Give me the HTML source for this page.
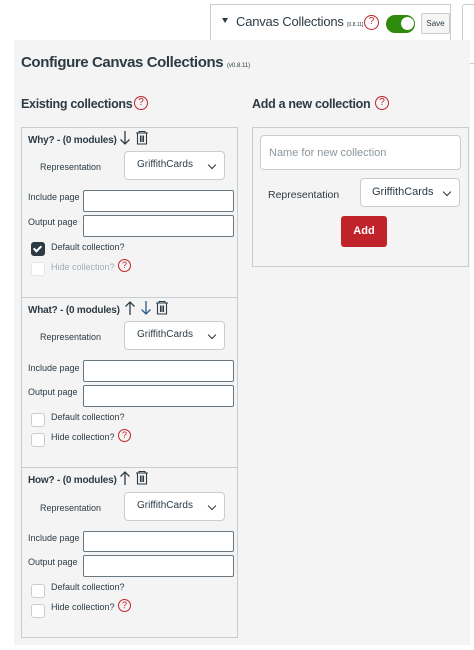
<!DOCTYPE html>
<html><head><meta charset="utf-8"><style>
*{box-sizing:border-box;margin:0;padding:0}
body{width:474px;height:650px;background:#fff;position:relative;overflow:hidden;font-family:"Liberation Sans",sans-serif;color:#2d3b45}
.a{position:absolute}
.q{position:absolute;width:14px;height:14px;border:1.3px solid #c1232a;border-radius:50%;color:#c1232a;font-size:10px;line-height:12px;text-align:center}
.box{position:absolute;border:1px solid #c7cdd1;background:#f4f4f4}
.lbl{position:absolute;font-size:9px;color:#2d3b45}
.inp{position:absolute;background:#fff;border:1px solid #6b7780;border-radius:2px}
.sel{position:absolute;background:#fff;border:1px solid #c7cdd1;border-radius:4px;font-size:10px;padding:7px 0 0 12px}
.sel:after{content:"";position:absolute;right:9px;top:10px;width:5px;height:5px;border-right:1.5px solid #333;border-bottom:1.5px solid #333;transform:rotate(45deg)}
.cb{position:absolute;width:14px;height:14px;background:#fff;border:1px solid #c7cdd1;border-radius:3px}
.hd{position:absolute;font-size:10px;font-weight:bold;letter-spacing:-0.2px}
</style></head><body>
<div class="a" style="left:210px;top:4px;width:241px;height:60px;border:1px solid #c7cdd1"></div>
<div class="a" style="left:462px;top:4px;width:20px;height:60px;border:1px solid #c7cdd1;border-radius:3px"></div>
<div class="a" style="left:222px;top:18px;width:0;height:0;border-left:3.5px solid transparent;border-right:3.5px solid transparent;border-top:5px solid #2d3b45"></div>
<div class="a" style="left:236px;top:14px;font-size:13px;letter-spacing:-0.2px">Canvas Collections <span style="font-size:5px;letter-spacing:0">[0.8.11]</span></div>
<div class="q" style="left:364px;top:15px;width:15px;height:15px">?</div>
<div class="a" style="left:386px;top:15px;width:29px;height:18px;border-radius:9px;background:#2d8a0a"></div>
<div class="a" style="left:401px;top:17px;width:13px;height:13px;border-radius:50%;background:#fff"></div>
<div class="a" style="left:421px;top:13px;width:29px;height:21px;border:1px solid #c7cdd1;border-radius:2px;background:#f5f5f5;font-size:8px;line-height:19px;text-align:center">Save</div>

<div class="a" style="left:14px;top:40px;width:456px;height:605px;background:#f4f4f4"></div>
<div class="a" style="left:21px;top:54px;font-size:15px;font-weight:bold;letter-spacing:-0.4px">Configure Canvas Collections <span style="font-size:6px;font-weight:normal;letter-spacing:0">(v0.8.11)</span></div>
<div class="a" style="left:21px;top:97px;font-size:12.5px;font-weight:bold;letter-spacing:-0.3px">Existing collections</div>
<div class="q" style="left:134px;top:96px">?</div>
<div class="a" style="left:252px;top:97px;font-size:12.5px;font-weight:bold;letter-spacing:-0.3px">Add a new collection</div>
<div class="q" style="left:375px;top:96px">?</div>

<div class="box" style="left:252px;top:127px;width:217px;height:140px"></div>
<div class="inp" style="left:260px;top:135px;width:201px;height:35px;border-color:#c7cdd1;border-radius:4px;font-size:11px;color:#8b969e;padding:11px 8px">Name for new collection</div>
<div class="lbl" style="left:268px;top:189px;font-size:10.5px">Representation</div>
<div class="sel" style="left:360px;top:178px;width:100px;height:29px;font-size:11px;padding:7px 0 0 11px">GriffithCards</div>
<div class="a" style="left:341px;top:216px;width:46px;height:31px;background:#c1232a;border-radius:3px;color:#fff;font-size:11px;font-weight:bold;text-align:center;line-height:31px">Add</div>

<!-- box1 -->
<div class="box" style="left:21px;top:127px;width:217px;height:171px"></div>
<div class="hd" style="left:28px;top:135px">Why? - (0 modules)</div>
<svg class="a" style="left:119px;top:130px" width="34" height="16"><path d="M6 1V14M1.5 9.5L6 14L10.5 9.5" stroke="#2d3b45" stroke-width="1.3" fill="none"/><path d="M17 3H29M20 3V1.5H26V3M18.5 3V14H27.5V3M21.5 5.5V12M23 5.5V12M24.5 5.5V12" stroke="#2d3b45" stroke-width="1.1" fill="none"/></svg>
<div class="lbl" style="left:40px;top:162px">Representation</div>
<div class="sel" style="left:124px;top:151px;width:101px;height:29px">GriffithCards</div>
<div class="lbl" style="left:28px;top:192px">Include page</div>
<div class="inp" style="left:83px;top:190px;width:151px;height:22px"></div>
<div class="lbl" style="left:28px;top:217px">Output page</div>
<div class="inp" style="left:83px;top:215px;width:151px;height:22px"></div>
<div class="cb" style="left:31px;top:242px;background:#2d3b45;border-color:#2d3b45"></div>
<div class="a" style="left:35px;top:244px;width:5px;height:8px;border-right:2px solid #fff;border-bottom:2px solid #fff;transform:rotate(45deg)"></div>
<div class="lbl" style="left:51px;top:242px">Default collection?</div>
<div class="cb" style="left:31px;top:262px;border-color:#e4e6e8"></div>
<div class="lbl" style="left:51px;top:262px;color:#a5adb3">Hide collection?</div>
<div class="q" style="left:118px;top:259px;width:13px;height:13px;font-size:9px;line-height:11px">?</div>

<!-- box2 -->
<div class="box" style="left:21px;top:297px;width:217px;height:171px"></div>
<div class="hd" style="left:28px;top:305px">What? - (0 modules)</div>
<svg class="a" style="left:124px;top:300px" width="50" height="16"><path d="M6 15V2M1.5 6.5L6 2L10.5 6.5" stroke="#2d3b45" stroke-width="1.3" fill="none"/><path d="M22 1V14M17.5 9.5L22 14L26.5 9.5" stroke="#2d5b8a" stroke-width="1.3" fill="none"/><path d="M32 3H44M35 3V1.5H41V3M33.5 3V14H42.5V3M36.5 5.5V12M38 5.5V12M39.5 5.5V12" stroke="#2d3b45" stroke-width="1.1" fill="none"/></svg>
<div class="lbl" style="left:40px;top:332px">Representation</div>
<div class="sel" style="left:124px;top:321px;width:101px;height:29px">GriffithCards</div>
<div class="lbl" style="left:28px;top:363px">Include page</div>
<div class="inp" style="left:83px;top:360px;width:151px;height:22px"></div>
<div class="lbl" style="left:28px;top:387px">Output page</div>
<div class="inp" style="left:83px;top:385px;width:151px;height:22px"></div>
<div class="cb" style="left:31px;top:413px"></div>
<div class="lbl" style="left:51px;top:412px">Default collection?</div>
<div class="cb" style="left:31px;top:433px"></div>
<div class="lbl" style="left:51px;top:432px">Hide collection?</div>
<div class="q" style="left:118px;top:429px;width:13px;height:13px;font-size:9px;line-height:11px">?</div>

<!-- box3 -->
<div class="box" style="left:21px;top:467px;width:217px;height:171px"></div>
<div class="hd" style="left:28px;top:475px">How? - (0 modules)</div>
<svg class="a" style="left:119px;top:470px" width="34" height="16"><path d="M6 15V2M1.5 6.5L6 2L10.5 6.5" stroke="#2d3b45" stroke-width="1.3" fill="none"/><path d="M17 3H29M20 3V1.5H26V3M18.5 3V14H27.5V3M21.5 5.5V12M23 5.5V12M24.5 5.5V12" stroke="#2d3b45" stroke-width="1.1" fill="none"/></svg>
<div class="lbl" style="left:40px;top:503px">Representation</div>
<div class="sel" style="left:124px;top:492px;width:101px;height:29px">GriffithCards</div>
<div class="lbl" style="left:28px;top:533px">Include page</div>
<div class="inp" style="left:83px;top:531px;width:151px;height:21px"></div>
<div class="lbl" style="left:28px;top:557px">Output page</div>
<div class="inp" style="left:83px;top:555px;width:151px;height:22px"></div>
<div class="cb" style="left:31px;top:584px"></div>
<div class="lbl" style="left:51px;top:582px">Default collection?</div>
<div class="cb" style="left:31px;top:604px"></div>
<div class="lbl" style="left:51px;top:602px">Hide collection?</div>
<div class="q" style="left:118px;top:599px;width:13px;height:13px;font-size:9px;line-height:11px">?</div>
</body></html>
